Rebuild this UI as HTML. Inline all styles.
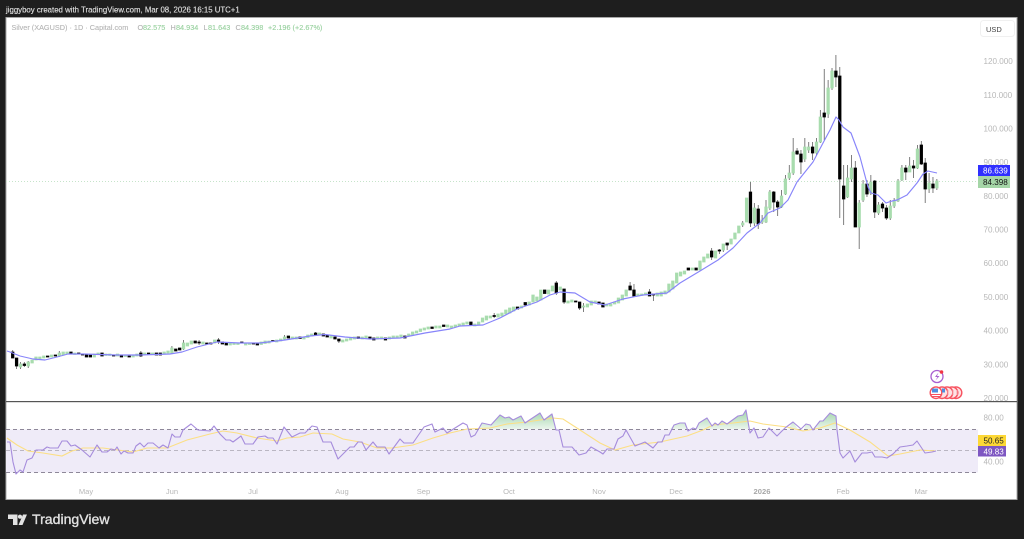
<!DOCTYPE html>
<html><head><meta charset="utf-8"><title>Silver XAGUSD</title>
<style>html,body{margin:0;padding:0;background:#1e1e1e;width:1024px;height:539px;overflow:hidden}svg{display:block;filter:blur(.35px)}text{font-family:"Liberation Sans",sans-serif}</style></head>
<body>
<svg width="1024" height="539" viewBox="0 0 1024 539" xmlns="http://www.w3.org/2000/svg">
<defs><linearGradient id="gf" gradientUnits="userSpaceOnUse" x1="0" y1="410" x2="0" y2="429"><stop offset="0" stop-color="#9fd4a8"/><stop offset="1" stop-color="#eaf5ec"/></linearGradient></defs>
<rect x="-5" y="-5" width="1034" height="549" fill="#1e1e1e"/>
<rect x="6" y="17.5" width="1011" height="482" fill="#fff" stroke="#a8a8a8" stroke-width="1"/>
<text x="6" y="12.500" font-size="7.820" fill="#e2e2e2" stroke="#e2e2e2" stroke-width=".12">jiggyboy created with TradingView.com, Mar 08, 2026 16:15 UTC+1</text>
<g font-size="7.300" stroke-width=".1">
<text x="11.500" y="30" fill="#b4b4b4" stroke="#b4b4b4">Silver (XAGUSD) · 1D · Capital.com</text>
<text x="137.500" y="30" fill="#b4b4b4" stroke="#b4b4b4">O</text><text x="143" y="30" fill="#96d09d" stroke="#96d09d">82.575</text>
<text x="170.500" y="30" fill="#b4b4b4" stroke="#b4b4b4">H</text><text x="176" y="30" fill="#96d09d" stroke="#96d09d">84.934</text>
<text x="203.500" y="30" fill="#b4b4b4" stroke="#b4b4b4">L</text><text x="208" y="30" fill="#96d09d" stroke="#96d09d">81.643</text>
<text x="235.500" y="30" fill="#b4b4b4" stroke="#b4b4b4">C</text><text x="241" y="30" fill="#96d09d" stroke="#96d09d">84.398</text>
<text x="268" y="30" fill="#96d09d" stroke="#96d09d">+2.196 (+2.67%)</text>
</g>
<rect x="980.500" y="20.500" width="34" height="16" rx="3" fill="#fff" stroke="#f0f0f0"/>
<text x="986" y="32" font-size="7.500" fill="#444">USD</text>
<line x1="6" y1="181.500" x2="978" y2="181.500" stroke="#c6e4ca" stroke-width="1" stroke-dasharray="1 2"/>
<g font-size="8.100" fill="#b8b8b8">
<text x="983.500" y="64">120.000</text><text x="983.500" y="98">110.000</text><text x="983.500" y="131.500">100.000</text>
<text x="983.500" y="165">90.000</text><text x="983.500" y="199">80.000</text><text x="983.500" y="232.500">70.000</text>
<text x="983.500" y="266">60.000</text><text x="983.500" y="300">50.000</text><text x="983.500" y="333.500">40.000</text>
<text x="983.500" y="367.500">30.000</text><text x="983.500" y="401">20.000</text>
</g>
<g transform="translate(12.7 0) scale(3.883 1)" fill="none">
<path stroke="#444" stroke-opacity=".8" stroke-width=".22" d="M0 350V358M1 358V369M2 362V369M3 362V367M4 361V368M12 351V357M33 351V357M41 346V354M44 340V350M48 340V345M53 338V344M70 335V340M78 332V336M84 339V343M124 313V318M140 281V295M142 289V304M146 302V310M147 303V312M160 284V296M159 282V290M164 289V296M165 294V301M180 248V260M182 249V254M184 243V250M183 245V252M188 221V227M190 182V227M191 203V226M192 205V229M193 215V224M194 200V223M195 190V210M196 191V212M197 200V216M198 190V208M199 175V195M200 165V180M201 138V175M202 148V155M203 150V174M204 138V162M205 142V153M206 142V160M207 138V156M208 110V143M209 69V140M210 80V118M211 68V90M212 55V87M213 67V218M214 165V225M215 165V198M216 155V182M217 161V227M218 200V249M219 180V202M220 180V197M221 175V195M222 180V218M223 202V215M224 202V212M225 205V220M226 200V220M227 198V208M228 179V202M229 165V181M230 165V180M231 157V172M232 160V178M233 145V169M234 141V165M235 158V203M236 173V193M237 177V193M238 179V190"/>
<path stroke="#a8dcae" stroke-width=".84" stroke-linecap="square" d="M2 364V367M4 362V366M5 360V363M6 357V360M7 357V359M8 356V358M10 355V357M12 353V356M13 352V355M14 352V354M16 353V354.5M21 354V357M22 353V354.5M24 354V355.5M25 354V355.5M27 354V356M29 355V356.5M31 355V357M32 354V356M34 353V354.5M36 353V354.5M39 352V354M40 351V353M41 348V353M44 343V349M45 343V346M46 341V344M49 342V344M52 340V343M56 343V345M57 343V344.5M58 343V344.5M60 343V345M61 343V344.5M64 342V344.5M65 341V343.5M66 341V343M68 340V342M69 339V341M70 337V339M72 337V339M73 337V339M75 337V339M76 335V337.5M77 334V336M79 333V335M82 336V338M85 340V342M86 339V341M87 338V340M88 337V339M90 337V339M91 336V338M94 337V339M95 337V339M97 337V339M98 336V338M99 336V338M100 335V337M102 334V336M103 332V334.500M104 331V333M105 329V331.500M106 328V330M107 327V329M109 326V328M110 326V328M112 325V327M113 326V328M114 325V327M115 324V326M116 323V325M117 322V324M119 324V326M120 322V325M121 318V322M122 316V320M123 316V318M125 314V317M126 313V316M127 310V314M128 308V313M129 307V311M131 306V308M133 302V305M134 295V302M135 297V301M136 290V300M138 290V294M139 286V291M141 287V290M143 301V303M144 300V302M147 306V307M148 304V307M149 301V305M150 301V303M153 304V306M154 304V306M155 302V304M156 298V303M157 295V300M158 290V296M161 294V296M162 294V295.500M163 293V295M166 293V296M167 292V296M168 291V294M169 284V292M170 281V289M171 273V283M172 272V276M173 271V274M175 268V270M177 261V270M178 257V262M179 254V258M181 251V258M183 244V250M185 239V244M186 233V239M187 226V233M188 223V225M189 198V222M191 208V223M193 220V222M194 207V222M195 192V208M198 196V207M199 179V194M200 173V178M201 152V173M204 147V159M205 147V150M207 142V153M208 117V142M210 88V114M211 71V88M215 178V197M216 168V179M218 203V227M219 184V200M221 182V193M223 205V213M226 206V218M227 201V206M228 181V201M229 168V180M231 166V172M233 149V168M236 183V189M238 181V188"/>
<path stroke="#000" stroke-width=".84" stroke-linecap="square" d="M0 352V358M1 358V366M3 364V365.500M9 356V357M11 355V356M15 352V354M17 353V354M18 354V355M19 354V357M20 355V357M23 353V356M26 355V356M28 355V357M30 356V357M33 353V356M35 353V354M37 353V355M38 353V355M42 349V351M43 348V350M47 341V343M48 342V343M50 343V344M51 343V344M53 340V342M54 342V344M55 343V345M59 342V343M62 343V344M63 343V345M67 340.500V341.500M71 336V338M74 337V338.500M78 333V335M80 334V336M81 335V337M83 337V339M84 339V341M89 337V338.500M92 337V339M93 338V340M96 338V340M101 336V338M108 327V328.500M111 325V326.500M118 322V325M124 315.500V316.500M130 307V309M132 302.500V305M137 290V293.500M140 283V293M142 289V302M145 301V302M146 302V308M151 302V304M152 303V307M159 286V290M160 290V296M164 292V296M165 294V295M174 268V270M176 268V270M180 251V257M182 250V251M184 243V245M190 192V223M192 209V224M196 192V202M197 202V207M202 151V154M203 154V162M206 147V153M209 113V117M212 71V77M213 76V179M214 186V199M217 168V227M220 184V194M222 181V212M224 204V208M225 208V218M230 168V172M232 166V168M234 145V164M235 163V189M237 184V188"/>
</g>
<polyline fill="none" stroke="#8784fa" stroke-width="1.150" stroke-linejoin="round" points="7,351 10,352 20,356 33,359 45,360 57,357 68,354 83,354 117,355 140,355 170,354 182,352 197,347 217,342 240,343 260,343 285,340 310,336 325,334.500 345,337 370,339 400,338 425,333 450,329 460,326 483,325 500,318 517,309 537,302 550,295 560,292 575,293 590,302 605,305 623,299 643,295 667,293 680,283 700,271 718,260 733,248 747,233 760,223 768,213 780,208 788,200 797,182 813,162 823,143 830,130 836,117 839,120 843,127 851,133 860,157 868,187 871,193 878,195 886,203 892,201 897,200 907,195 917,183 923,174 928,171 937,173"/>
<circle cx="937" cy="376.500" r="6" fill="#fff" stroke="#a95fd1" stroke-width="1.300"/>
<path d="M938.500 372.500L935 377H937.500L935.500 380.500L939.500 376H937Z" fill="#a95fd1"/>
<circle cx="941.500" cy="372" r="1.800" fill="#f23645"/>
<g stroke="#f7525f" stroke-width="1.400">
<circle cx="956" cy="392.700" r="5.800" fill="#fde3e5"/><circle cx="952" cy="392.700" r="5.800" fill="#fde3e5"/><circle cx="947" cy="392.700" r="5.800" fill="#fde3e5"/><circle cx="942" cy="392.700" r="5.800" fill="#fde3e5"/><circle cx="936" cy="392.700" r="5.800" fill="#fff"/>
</g>
<rect x="932" y="388.500" width="6" height="4" fill="#4f8fe0"/><rect x="942" y="388.500" width="3" height="4" fill="#4f8fe0"/>
<path d="M931 394.500h10M931 396.500h9" stroke="#f7525f" stroke-width="1"/>
<path d="M948 390v5M953 390v5M957 390v5" stroke="#f7a0a8" stroke-width="1"/>
<rect x="6" y="401" width="1011" height="1.200" fill="#555"/>
<rect x="6" y="429.500" width="972" height="43" fill="#efebf8"/>
<g stroke="#8e8899" stroke-width="1" stroke-dasharray="4 3"><line x1="6" y1="429.500" x2="978" y2="429.500"/><line x1="6" y1="472.500" x2="978" y2="472.500"/></g>
<line x1="6" y1="450.500" x2="978" y2="450.500" stroke="#bab6c2" stroke-width="1" stroke-dasharray="4 3"/>
<g fill="url(#gf)">
<polygon points="479,429 482,423 491,425 500,415 505,418 509,417 513,420 521,416 525,423 540,413 544,420 552,414 556,429"/>
<polygon points="670,429 674,425 680,423 685,423 687,429 692,429 696,429 699,423 707,418 712,426 715,423 718,425 722,421 727,424 738,416 743,415 746,410 749,429"/>
<polygon points="788,429 793,422 798,429 804,429 806,424 810,425 813,429 815,429 820,421 823,421 830,413 836,416 837,429"/>
</g>
<polyline fill="none" stroke="#fcdf84" stroke-width="1.100" points="7,438 17,445 28,451 43,453 62,456 72,451 83,448 103,448 133,452 147,448 167,448 187,440 210,434 223,431 237,433 257,438 277,441 287,438 300,437 313,433 332,434 343,439 360,442 377,448 392,448 413,445 433,438 450,433 467,429 490,428 507,424 527,422 553,418 563,419 580,430 600,443 615,450 633,445 660,442 687,436 703,430 713,425 733,423 750,421 763,424 787,427 803,431 820,428 835,423 850,430 870,442 888,456 900,454 920,450 936,451"/>
<polyline fill="none" stroke="#a68cdc" stroke-width="1.100" stroke-linejoin="round" points="7,442 10,442 13,462 16,474 20,470 23,472 27,460 32,458 36,450 43,450 47,447 50,448 55,448 58,448 62,441 67,441 71,446 75,445 82,450 90,457 97,445 102,452 107,452 111,449 115,450 117,447 121,454 124,451 128,453 133,453 136,446 140,443 144,447 148,443 153,443 159,448 163,445 168,448 172,434 175,437 180,437 183,430 191,424 198,430 210,431 214,426 220,434 226,440 230,440 233,442 241,436 245,444 253,444 258,437 265,436 268,438 273,438 277,444 284,427 292,437 300,433 305,433 312,426 317,427 323,442 331,442 338,459 350,447 354,447 358,442 362,442 366,450 373,442 377,447 385,447 389,454 400,439 404,443 413,443 424,427 432,424 435,432 443,428 447,433 463,423 467,425 471,437 475,435 482,423 491,425 500,415 505,418 509,417 513,420 521,416 525,423 540,413 544,420 552,414 556,430 559,430 563,447 572,447 579,455 586,453 591,447 600,452 603,454 607,449 614,449 618,439 623,436 626,430 635,446 645,442 653,448 658,442 662,442 665,435 669,435 674,425 680,423 685,423 688,431 693,428 696,429 699,423 707,418 712,426 715,423 718,425 722,421 727,424 738,416 743,415 746,410 750,433 754,428 758,438 763,437 769,428 777,436 785,428 793,422 801,429 806,424 810,425 813,430 820,421 823,421 830,413 836,416 837,430 840,453 843,458 850,451 855,462 862,453 867,453 872,452 875,457 882,457 887,458 893,454 900,447 907,446 913,445 917,441 925,453 932,452 936,451"/>
<g font-size="8.100" fill="#b8b8b8"><text x="983.500" y="420.500">80.00</text><text x="983.500" y="464.500">40.00</text></g>
<rect x="978" y="435" width="28" height="11" fill="#fdd835"/>
<text x="983.500" y="443.700" font-size="8.100" fill="#222">50.65</text>
<rect x="978" y="446" width="28" height="10.500" fill="#7e57c2"/>
<text x="983.500" y="454.500" font-size="8.100" fill="#fff">49.83</text>
<rect x="978" y="165" width="32" height="11" fill="#2f2fff"/>
<text x="983" y="173.700" font-size="8.100" fill="#fff">86.639</text>
<rect x="978" y="176" width="32" height="12" fill="#a5d6a7"/>
<text x="983" y="185" font-size="8.100" fill="#111">84.398</text>
<g font-size="7.600" fill="#b8b8b8" text-anchor="middle">
<text x="86" y="494">May</text><text x="172" y="494">Jun</text><text x="253" y="494">Jul</text><text x="342" y="494">Aug</text><text x="423.500" y="494">Sep</text><text x="509" y="494">Oct</text><text x="599" y="494">Nov</text><text x="676" y="494">Dec</text><text x="762" y="494" fill="#a8a8a8" font-weight="bold">2026</text><text x="843" y="494">Feb</text><text x="921" y="494">Mar</text>
</g>
<path d="M8 514.500H17.500V525H13V519H8Z" fill="#e2e2e2"/>
<circle cx="20" cy="516.700" r="2.100" fill="#e2e2e2"/>
<path d="M18.500 525L23 514.500H27L22.500 525Z" fill="#e2e2e2"/>
<text x="32" y="524" font-size="14.100" fill="#e2e2e2" stroke="#e2e2e2" stroke-width=".35">TradingView</text>
</svg>
</body></html>
